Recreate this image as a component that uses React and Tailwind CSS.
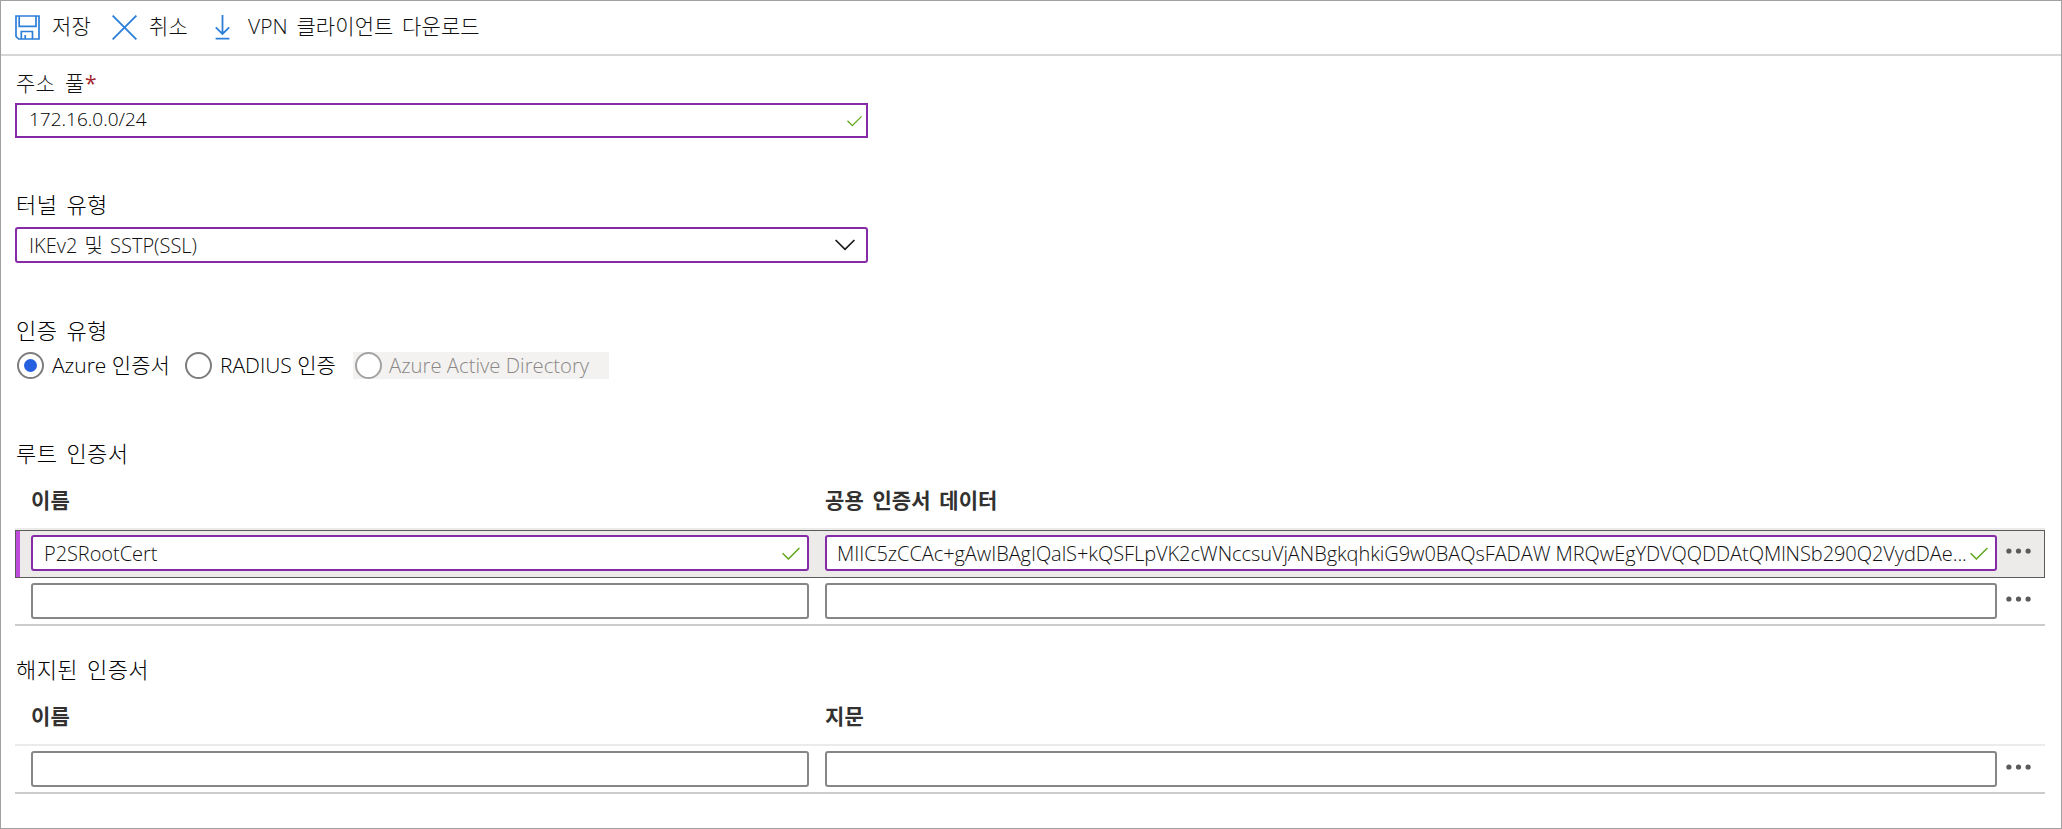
import React from 'react';

const SANS = "font-['Open_Sans','Noto_Sans_CJK_KR',sans-serif]";

function SaveIcon() {
  return (
    <svg className="block h-[25px] w-[25px] shrink-0" viewBox="0 0 25 25" fill="none" stroke="#2d7fd9" strokeWidth="1.7">
      <path d="M1 1H24V24H3.6L1 21.4Z" />
      <path d="M4.2 1V11.3H21V1" />
      <path d="M6.3 24V16.5H17.5V24" />
      <path d="M10.2 24V20" />
    </svg>
  );
}

function CancelIcon() {
  return (
    <svg className="block h-[25px] w-[25px] shrink-0" viewBox="0 0 25 25" fill="none" stroke="#2d7fd9" strokeWidth="1.9">
      <path d="M0.6 0.6L24.4 24.4M24.4 0.6L0.6 24.4" />
    </svg>
  );
}

function DownloadIcon() {
  return (
    <svg className="block h-[25px] w-[15px] shrink-0" viewBox="0 0 15 25" fill="none" stroke="#2d7fd9" strokeWidth="1.8">
      <path d="M7.5 0V19M0.8 12.3L7.5 19L14.2 12.3M0.6 23.7H14.4" />
    </svg>
  );
}

function Check({ className }) {
  return (
    <svg className={className} viewBox="0 0 18 13" fill="none" stroke="#5fa61a" strokeWidth="1.5">
      <path d="M0.6 6.2L6.4 12L17.4 1" />
    </svg>
  );
}

function Dots() {
  return (
    <svg className="mb-[4px] ml-[9px] block h-[6px] w-[25px] shrink-0" viewBox="0 0 25 6" fill="#5c5a58">
      <circle cx="2.9" cy="3" r="2.6" />
      <circle cx="12.5" cy="3" r="2.6" />
      <circle cx="22.1" cy="3" r="2.6" />
    </svg>
  );
}

function Radio({ checked, muted }) {
  return (
    <span
      className={
        'flex h-[27px] w-[27px] shrink-0 items-center justify-center rounded-full border-2 bg-white ' +
        (muted ? 'border-[#a3a3a3]' : 'border-[#7d7d7d]')
      }
    >
      {checked && <span className="h-[13px] w-[13px] rounded-full bg-[#2560e0]" />}
    </span>
  );
}

function Cell({ wide, value }) {
  return (
    <div
      className={
        'flex h-[36px] shrink-0 items-center justify-between rounded-[3px] border-2 bg-white ' +
        (wide ? 'w-[1172px] pl-[10px] ' : 'w-[778px] pl-[11px] ') +
        (value ? 'border-[#862ba8]' : 'border-[#868686]')
      }
    >
      {value && (
        <>
          <span className="pt-px text-[20px] leading-[30px] tracking-[-0.06px] text-[#111]">{value}</span>
          <Check className="mr-[7px] block h-[13px] w-[18px] shrink-0" />
        </>
      )}
    </div>
  );
}

function Row({ name, data }) {
  return (
    <>
      <Cell value={name} />
      <span className="w-[16px] shrink-0" />
      <Cell wide value={data} />
      <Dots />
    </>
  );
}

function Label({ children }) {
  return (
    <div className="h-[30px] pl-px text-[22px] leading-[30px] tracking-[0.4px] text-black [word-spacing:3px]">{children}</div>
  );
}

function Head({ second }) {
  return (
    <div className="flex h-[30px] pl-[16px] text-[21px] leading-[30px] font-bold tracking-[0.1px] text-[#323130] [word-spacing:3px]">
      <span className="w-[794px]">이름</span>
      <span>{second}</span>
    </div>
  );
}

export default function App() {
  return (
    <div className={`${SANS} h-[829px] w-[2062px] overflow-hidden border border-[#a0a0a0] bg-white font-light whitespace-nowrap`}>
      <div className="flex h-[55px] items-start border-b-2 border-[#d6d6d6] pt-[14px] pl-[14px] text-[21px] leading-[23px] tracking-[0.1px] text-[#111] [word-spacing:3px]">
        <SaveIcon />
        <span className="ml-[12px] w-[60px]">저장</span>
        <CancelIcon />
        <span className="ml-[12px] w-[66px]">취소</span>
        <DownloadIcon />
        <span className="ml-[18px]">VPN 클라이언트 다운로드</span>
      </div>

      <div className="flex flex-col pt-[12px] pl-[14px]">
        <div className="flex h-[30px] pl-px text-[21px] leading-[30px] text-[#111]">
          <span className="w-[69px] tracking-[0.3px] [word-spacing:4px]">주소 풀</span>
          <span className="font-normal text-[#a4262c]">*</span>
        </div>
        <div className="mt-[5px] flex h-[35px] w-[853px] items-center justify-between border-2 border-[#862ba8] pl-[12px]">
          <span className="pb-[2px] text-[19px] leading-[29px] text-black">172.16.0.0/24</span>
          <Check className="mr-[4px] block h-[12px] w-[15px]" />
        </div>

        <div className="mt-[51px]">
          <Label>터널 유형</Label>
        </div>
        <div className="mt-[8px] flex h-[36px] w-[853px] items-center justify-between rounded-[3px] border-2 border-[#862ba8] pl-[12px]">
          <span className="pt-px text-[20px] leading-[30px] text-[#111] [word-spacing:2px]">IKEv2 및 SSTP(SSL)</span>
          <svg className="mr-[11px] block h-[12px] w-[20px]" viewBox="0 0 20 12" fill="none" stroke="#1a1a1a" strokeWidth="1.7">
            <path d="M0.6 1L10 10.4L19.4 1" />
          </svg>
        </div>

        <div className="mt-[52px]">
          <Label>인증 유형</Label>
        </div>
        <div className="mt-[7px] flex h-[27px] pl-[2px] text-[21px] leading-[26px] text-black">
          <Radio checked />
          <span className="ml-[8px] w-[133px]">Azure 인증서</span>
          <Radio />
          <span className="ml-[8px] w-[133px]">RADIUS 인증</span>
          <div className="flex w-[256px] bg-[#f3f2f1] pl-[2px] text-[20.3px] text-[#8a8886]">
            <Radio muted />
            <span className="ml-[7px]">Azure Active Directory</span>
          </div>
        </div>

        <div className="mt-[59px]">
          <Label>루트 인증서</Label>
        </div>
        <div className="mt-[17px]">
          <Head second="공용 인증서 데이터" />
        </div>
        <div className="mt-[13px] h-[2px] w-[2030px] bg-[#ebebeb]" />
        <div className="flex h-[48px] w-[2030px] border border-[#5c5a58] bg-[#edebe9]">
          <div className="mr-[11px] w-[4px] shrink-0 bg-[#be4bdb]" />
          <div className="flex items-center pb-[2px]">
            <Row
              name="P2SRootCert"
              data="MIIC5zCCAc+gAwIBAgIQalS+kQSFLpVK2cWNccsuVjANBgkqhkiG9w0BAQsFADAW MRQwEgYDVQQDDAtQMlNSb290Q2VydDAe..."
            />
          </div>
        </div>
        <div className="flex h-[48px] w-[2030px] items-center border-b-2 border-[#ccc] pl-[16px]">
          <Row />
        </div>

        <div className="mt-[28px]">
          <Label>해지된 인증서</Label>
        </div>
        <div className="mt-[17px]">
          <Head second="지문" />
        </div>
        <div className="mt-[13px] h-[2px] w-[2030px] bg-[#ebebeb]" />
        <div className="flex h-[48px] w-[2030px] items-center border-b-2 border-[#ccc] pl-[16px]">
          <Row />
        </div>
      </div>
    </div>
  );
}
